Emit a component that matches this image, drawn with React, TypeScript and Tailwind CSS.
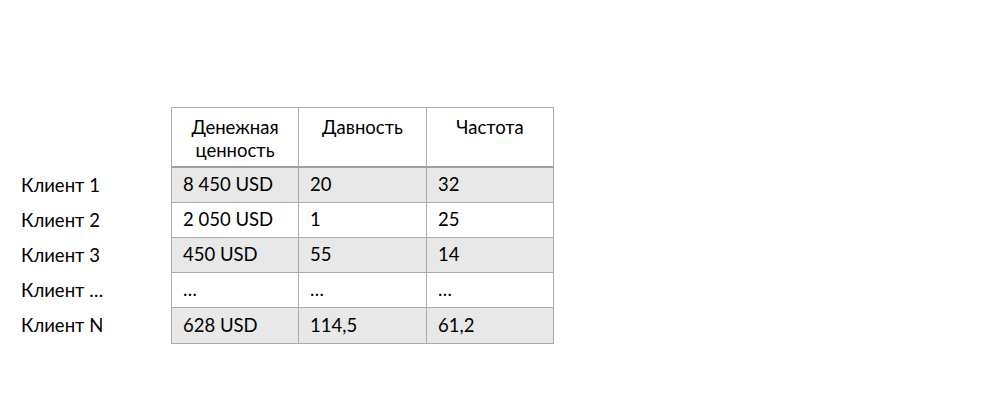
const rows = [
  { label: "Клиент 1", money: "8 450 USD", recency: "20", freq: "32", shaded: true },
  { label: "Клиент 2", money: "2 050 USD", recency: "1", freq: "25", shaded: false },
  { label: "Клиент 3", money: "450 USD", recency: "55", freq: "14", shaded: true },
  { label: "Клиент …", money: "…", recency: "…", freq: "…", shaded: false },
  { label: "Клиент N", money: "628 USD", recency: "114,5", freq: "61,2", shaded: true },
];

export default function App() {
  return (
    <div
      className="w-[989px] h-[404px] bg-white text-[18.5px] text-black pt-[107px]"
      style={{ fontFamily: "Lato, 'Open Sans', sans-serif" }}
    >
      <div className="flex">
        {/* row labels */}
        <div className="w-[171px] pl-[21px]">
          <div className="h-[61px]" />
          {rows.map((r) => (
            <div key={r.label} className="h-[35px] flex items-center">
              {r.label}
            </div>
          ))}
        </div>

        {/* table */}
        <div className="w-[383px] border border-[#ababab]">
          <div className="grid grid-cols-[127px_128px_126px] h-[60px] border-b-2 border-[#a0a0a0] leading-[23px] text-center">
            <div className="border-r border-[#ababab] pt-[8px]">
              Денежная
              <br />
              ценность
            </div>
            <div className="border-r border-[#ababab] pt-[8px]">Давность</div>
            <div className="pt-[8px]">Частота</div>
          </div>
          {rows.map((r, i) => (
            <div
              key={r.label}
              className={`grid grid-cols-[127px_128px_126px] h-[35px] ${
                i < rows.length - 1 ? "border-b border-[#ababab]" : ""
              } ${r.shaded ? "bg-[#e8e8e8]" : "bg-white"}`}
            >
              <div className="border-r border-[#ababab] pl-[11px] flex items-center">{r.money}</div>
              <div className="border-r border-[#ababab] pl-[11px] flex items-center">{r.recency}</div>
              <div className="pl-[11px] flex items-center">{r.freq}</div>
            </div>
          ))}
        </div>
      </div>
    </div>
  );
}
